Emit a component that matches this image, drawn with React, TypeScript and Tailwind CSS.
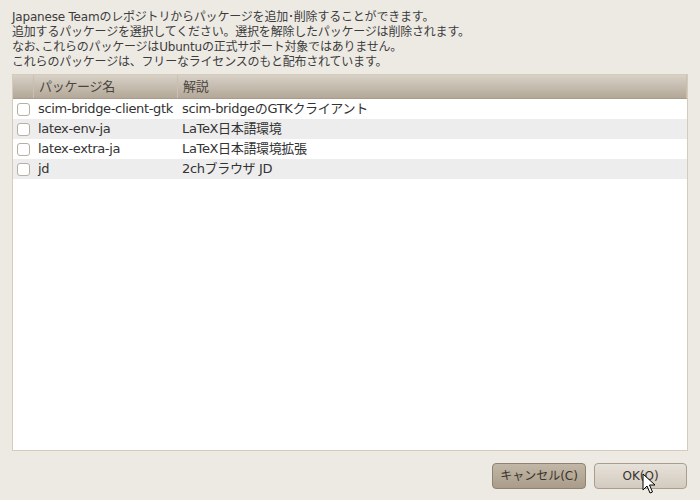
import React from 'react';

const rows = [
  { name: 'scim-bridge-client-gtk', desc: 'scim-bridgeのGTKクライアント' },
  { name: 'latex-env-ja', desc: 'LaTeX日本語環境' },
  { name: 'latex-extra-ja', desc: 'LaTeX日本語環境拡張' },
  { name: 'jd', desc: '2chブラウザ JD' },
];

const font = { fontFamily: '"DejaVu Sans", "Noto Sans CJK JP", sans-serif' };

function Cursor() {
  return (
    <svg width="14" height="22" viewBox="0 0 14 22" className="absolute left-[642px] top-[473px]">
      <path d="M1 1 L1 17 L5 13 L8 20 L10.5 19 L7.5 12 L13 12 Z" fill="#fff" stroke="#000" strokeWidth="1" strokeLinejoin="round" />
    </svg>
  );
}

export default function App() {
  return (
    <div className="relative w-[700px] h-[500px] bg-[#edeae4] text-[#3c3c3c] flex flex-col" style={font}>
      {/* Intro text */}
      <div className="px-3 pt-[10px] text-[12px] leading-[15px] tracking-[-0.2px]">
        <p>Japanese Teamのレポジトリからパッケージを追加･削除することができます。</p>
        <p>追加するパッケージを選択してください。選択を解除したパッケージは削除されます。</p>
        <p>なお､これらのパッケージはUbuntuの正式サポート対象ではありません。</p>
        <p>これらのパッケージは、フリーなライセンスのもと配布されています。</p>
      </div>

      {/* Package list */}
      <div className="mx-3 mt-[4px] h-[377px] w-[676px] border border-[#d6cbb8] bg-white flex flex-col">
        <div className="flex h-[24px] bg-gradient-to-b from-[#d8d1c7] to-[#b3a898] text-[13px] tracking-[-0.3px] text-[#4a4540] border-b border-[#a89d8d]">
          <div className="w-[21px] border-r border-[#c9c0b2]" />
          <div className="w-[144px] pl-[5px] flex items-center border-r border-[#c9c0b2]">パッケージ名</div>
          <div className="flex-1 pl-[5px] flex items-center border-r border-[#c9c0b2]">解説</div>
        </div>
        {rows.map((r, i) => (
          <div key={r.name} className={`flex h-[20px] items-center text-[13px] tracking-[-0.35px] text-[#333] ${i % 2 ? 'bg-[#ededed]' : 'bg-white'}`}>
            <div className="w-[21px] flex justify-center">
              <div className="w-[13px] h-[13px] rounded-[3px] border border-[#b7afa3] bg-white" />
            </div>
            <div className="w-[144px] pl-[4px] whitespace-nowrap">{r.name}</div>
            <div className="flex-1 pl-[4px] whitespace-nowrap">{r.desc}</div>
          </div>
        ))}
      </div>

      {/* Buttons */}
      <div className="flex justify-end gap-[8px] pr-[13px] mt-[12px]">
        <button className="w-[94px] h-[26px] rounded-[4px] border border-[#8f8270] bg-gradient-to-b from-[#c2b7a7] to-[#a99c89] text-[12px] text-[#3a342c]">
          キャンセル(C)
        </button>
        <button className="w-[93px] h-[26px] rounded-[4px] border border-[#a99d8c] bg-gradient-to-b from-[#e6e1d9] to-[#d3cbbf] text-[12px] text-[#3a342c]">
          OK(O)
        </button>
      </div>
      <Cursor />
    </div>
  );
}
